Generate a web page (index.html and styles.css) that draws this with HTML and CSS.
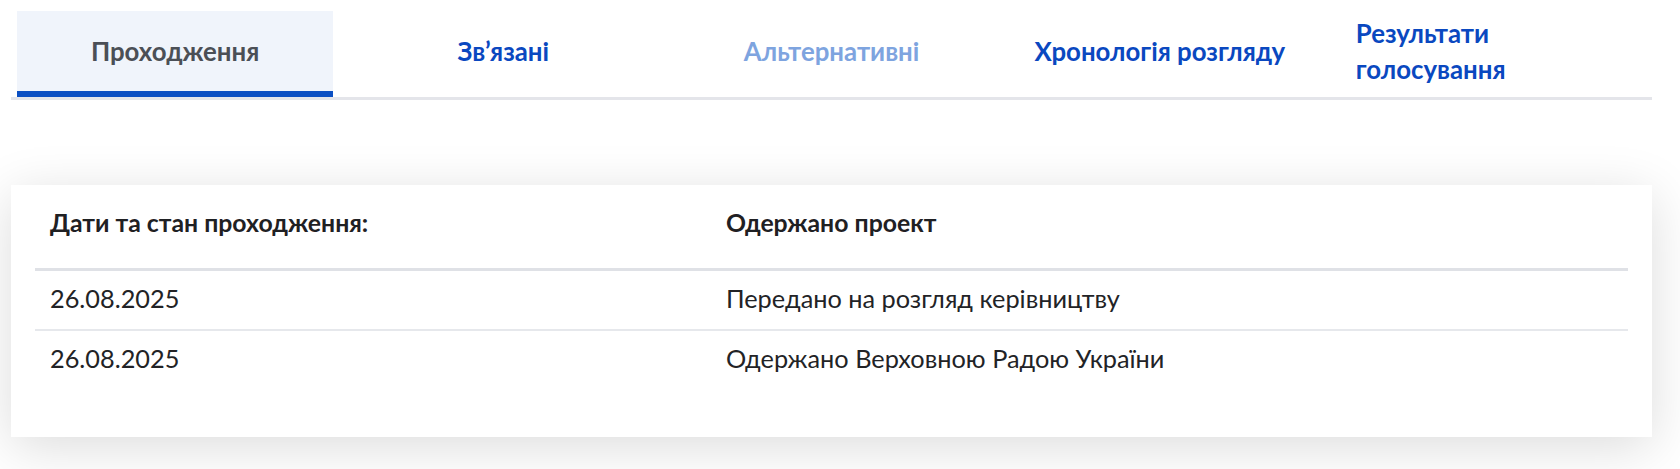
FILE: index.html
```html
<!DOCTYPE html>
<html lang="uk">
<head>
<meta charset="utf-8">
<title>Проходження</title>
<link rel="stylesheet" href="styles.css">
</head>
<body>
<div class="page">
  <nav class="tabs">
    <a class="tab tab--active">Проходження</a>
    <a class="tab">Зв’язані</a>
    <a class="tab tab--disabled">Альтернативні</a>
    <a class="tab">Хронологія розгляду</a>
    <a class="tab">Результати голосування</a>
  </nav>
  <section class="card">
    <table class="stages">
      <thead>
        <tr>
          <th class="col-date">Дати та стан проходження:</th>
          <th>Одержано проект</th>
        </tr>
      </thead>
      <tbody>
        <tr>
          <td>26.08.2025</td>
          <td>Передано на розгляд керівництву</td>
        </tr>
        <tr>
          <td>26.08.2025</td>
          <td>Одержано Верховною Радою України</td>
        </tr>
      </tbody>
    </table>
  </section>
</div>
</body>
</html>
```
FILE: styles.css
```css
html, body {
  margin: 0;
  padding: 0;
  background: #ffffff;
}

body {
  font-family: Lato, "Noto Sans", sans-serif;
  color: #222326;
  min-height: 469px;
}

.page {
  padding: 11px 28px 40px 11px;
}

.tabs {
  display: flex;
  gap: 12px;
  padding: 0 6px;
  border-bottom: 3px solid #e4e5ea;
}

.tab {
  flex: 1 1 0;
  min-width: 0;
  height: 80px;
  padding: 0 26px;
  display: flex;
  align-items: center;
  justify-content: center;
  border-bottom: 6px solid transparent;
  font-size: 25.8px;
  font-weight: 700;
  line-height: 36px;
  color: #0a48c0;
  text-decoration: none;
  cursor: pointer;
}

.tab--active {
  background: #f0f4fb;
  border-bottom-color: #0b4fc3;
  color: #4b4f56;
}

.tab--disabled {
  color: #7ea4df;
  cursor: default;
}

.card {
  margin-top: 85px;
  background: #ffffff;
  padding: 8px 24px 48px;
  box-shadow: 0 10px 50px rgba(0, 0, 0, 0.14);
}

.stages {
  width: 100%;
  border-collapse: collapse;
}

.stages th {
  text-align: left;
  font-size: 24.8px;
  font-weight: 700;
  line-height: 32px;
  color: #1f2023;
  padding: 14px 15px 29px;
  border-bottom: 3px solid #dfe1e6;
}

.stages .col-date {
  width: 646px;
}

.stages td {
  font-size: 25.3px;
  font-weight: 400;
  line-height: 30px;
  color: #222326;
  padding: 12px 15px 16px;
  border-bottom: 2px solid #e6e8ec;
}

.stages tbody tr:last-child td {
  border-bottom: none;
}
```
